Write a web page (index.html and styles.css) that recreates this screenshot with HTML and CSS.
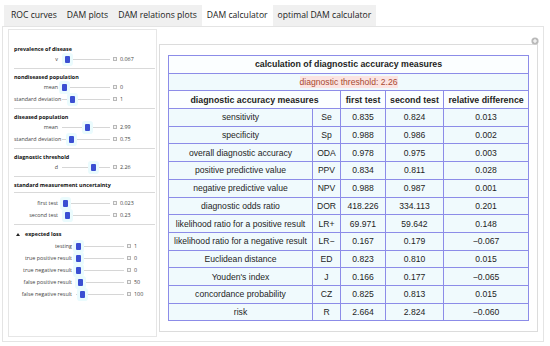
FILE: index.html
```html
<!DOCTYPE html>
<html lang="en">
<head>
    <meta charset="UTF-8">
    <title>DAM calculator</title>
    <link rel="stylesheet" href="styles.css">
</head>
<body>
    <div class="tabs">
        <div class="tab">ROC curves</div>
        <div class="tab">DAM plots</div>
        <div class="tab">DAM relations plots</div>
        <div class="tab active">DAM calculator</div>
        <div class="tab">optimal DAM calculator</div>
    </div>

    <div class="tab-panel">
        <div class="controls">
            <div class="section first">
                <div class="section-title">prevalence of disease</div>
                <div class="control-row">
                    <span class="label">v</span>
                    <span class="track"><span class="thumb" style="left: 8%"></span></span>
                    <span class="box"></span>
                    <span class="value">0.067</span>
                </div>
            </div>

            <div class="section">
                <div class="section-title">nondiseased population</div>
                <div class="control-row">
                    <span class="label">mean</span>
                    <span class="track"><span class="thumb" style="left: 2%"></span></span>
                    <span class="box"></span>
                    <span class="value">0</span>
                </div>
                <div class="control-row">
                    <span class="label">standard deviation</span>
                    <span class="track"><span class="thumb" style="left: 19%"></span></span>
                    <span class="box"></span>
                    <span class="value">1</span>
                </div>
            </div>

            <div class="section">
                <div class="section-title">diseased population</div>
                <div class="control-row">
                    <span class="label">mean</span>
                    <span class="track"><span class="thumb" style="left: 50%"></span></span>
                    <span class="box"></span>
                    <span class="value">2.99</span>
                </div>
                <div class="control-row">
                    <span class="label">standard deviation</span>
                    <span class="track"><span class="thumb" style="left: 17%"></span></span>
                    <span class="box"></span>
                    <span class="value">0.75</span>
                </div>
            </div>

            <div class="section">
                <div class="section-title">diagnostic threshold</div>
                <div class="control-row">
                    <span class="label">d</span>
                    <span class="track"><span class="thumb" style="left: 62%"></span></span>
                    <span class="box"></span>
                    <span class="value">2.26</span>
                </div>
            </div>

            <div class="section">
                <div class="section-title">standard measurement uncertainty</div>
            </div>

            <div class="section">
                <div class="control-row">
                    <span class="label">first test</span>
                    <span class="track"><span class="thumb" style="left: 4%"></span></span>
                    <span class="box"></span>
                    <span class="value">0.023</span>
                </div>
                <div class="control-row">
                    <span class="label">second test</span>
                    <span class="track"><span class="thumb" style="left: 8%"></span></span>
                    <span class="box"></span>
                    <span class="value">0.23</span>
                </div>
            </div>

            <div class="section loss">
                <div class="section-title"><span class="arrow"></span>expected loss</div>
                <div class="control-row">
                    <span class="label">testing</span>
                    <span class="track"><span class="thumb" style="left: 2%"></span></span>
                    <span class="box"></span>
                    <span class="value">1</span>
                </div>
                <div class="control-row">
                    <span class="label">true positive result</span>
                    <span class="track"><span class="thumb" style="left: 2%"></span></span>
                    <span class="box"></span>
                    <span class="value">0</span>
                </div>
                <div class="control-row">
                    <span class="label">true negative result</span>
                    <span class="track"><span class="thumb" style="left: 2%"></span></span>
                    <span class="box"></span>
                    <span class="value">0</span>
                </div>
                <div class="control-row">
                    <span class="label">false positive result</span>
                    <span class="track"><span class="thumb" style="left: 6%"></span></span>
                    <span class="box"></span>
                    <span class="value">50</span>
                </div>
                <div class="control-row">
                    <span class="label">false negative result</span>
                    <span class="track"><span class="thumb" style="left: 10%"></span></span>
                    <span class="box"></span>
                    <span class="value">100</span>
                </div>
            </div>
        </div>

        <div class="output">
            <span class="corner-icon">
                <svg width="8" height="8" viewBox="0 0 8 8">
                    <circle cx="4" cy="4" r="3.6" fill="#b9b9b9"/>
                    <path d="M4 2v4M2 4h4" stroke="#fff" stroke-width="1.1"/>
                </svg>
            </span>
            <table class="measures">
                <colgroup>
                    <col style="width: 144px">
                    <col style="width: 28px">
                    <col style="width: 45px">
                    <col style="width: 58px">
                    <col style="width: 85px">
                </colgroup>
                <tr class="title-row"><td colspan="5">calculation of diagnostic accuracy measures</td></tr>
                <tr class="threshold-row"><td colspan="5"><span class="threshold">diagnostic threshold: 2.26</span></td></tr>
                <tr class="head-row">
                    <td colspan="2">diagnostic accuracy measures</td>
                    <td>first test</td>
                    <td>second test</td>
                    <td>relative difference</td>
                </tr>
                <tr><td>sensitivity</td><td>Se</td><td>0.835</td><td>0.824</td><td>0.013</td></tr>
                <tr><td>specificity</td><td>Sp</td><td>0.988</td><td>0.986</td><td>0.002</td></tr>
                <tr><td>overall diagnostic accuracy</td><td>ODA</td><td>0.978</td><td>0.975</td><td>0.003</td></tr>
                <tr><td>positive predictive value</td><td>PPV</td><td>0.834</td><td>0.811</td><td>0.028</td></tr>
                <tr><td>negative predictive value</td><td>NPV</td><td>0.988</td><td>0.987</td><td>0.001</td></tr>
                <tr><td>diagnostic odds ratio</td><td>DOR</td><td>418.226</td><td>334.113</td><td>0.201</td></tr>
                <tr><td>likelihood ratio for a positive result</td><td>LR+</td><td>69.971</td><td>59.642</td><td>0.148</td></tr>
                <tr><td>likelihood ratio for a negative result</td><td>LR&minus;</td><td>0.167</td><td>0.179</td><td>&minus;0.067</td></tr>
                <tr><td>Euclidean distance</td><td>ED</td><td>0.823</td><td>0.810</td><td>0.015</td></tr>
                <tr><td>Youden's index</td><td>J</td><td>0.166</td><td>0.177</td><td>&minus;0.065</td></tr>
                <tr><td>concordance probability</td><td>CZ</td><td>0.825</td><td>0.813</td><td>0.015</td></tr>
                <tr><td>risk</td><td>R</td><td>2.664</td><td>2.824</td><td>&minus;0.060</td></tr>
            </table>
        </div>
    </div>
</body>
</html>
```

FILE: styles.css
```css
* {
    margin: 0;
    padding: 0;
    box-sizing: border-box;
}

body {
    background: white;
    font-family: 'Open Sans', 'Noto Sans', sans-serif;
    color: #222;
    width: 550px;
    height: 346px;
    overflow: hidden;
}

/* tab bar */
.tabs {
    display: inline-flex;
    margin: 5px 0 0 4px;
    padding-left: 2px;
    background: #f0f0f0;
    height: 21px;
}

.tab {
    padding: 0 5px;
    font-size: 8.6px;
    line-height: 21px;
    color: #1a1a1a;
}

.tab.active {
    background: white;
}

.tab-panel {
    display: flex;
    gap: 2px;
    width: 542px;
    height: 316px;
    margin-left: 2px;
    padding: 2px 4px 0 5px;
    border: 1px solid #e4e4e4;
}

/* left column with sliders */
.controls {
    width: 149px;
    height: 308px;
    border: 1px solid #e6e6e6;
    padding: 0 1px 0 5px;
}

.section {
    padding: 4px 0 3px;
    border-bottom: 1px solid #d9d9d9;
}

.section.first {
    padding-top: 15px;
}

.section.loss {
    padding-top: 5px;
    border-bottom: none;
}

.section-title {
    font-size: 5.4px;
    font-weight: 700;
    line-height: 8px;
    height: 8px;
    color: #111;
    display: flex;
    align-items: center;
}

.loss .section-title {
    margin-bottom: 2px;
}

.arrow {
    width: 0;
    height: 0;
    margin: 0 5px 0 2px;
    border-left: 2.5px solid transparent;
    border-right: 2.5px solid transparent;
    border-bottom: 3.5px solid #222;
}

.control-row {
    display: flex;
    align-items: center;
    height: 12px;
    font-size: 5.4px;
    color: #444;
}

.label {
    width: 44px;
    text-align: right;
    white-space: nowrap;
}

.loss .label {
    width: 58px;
}

.track {
    position: relative;
    width: 48px;
    height: 1px;
    margin-left: 4px;
    background: #d6d6d6;
}

.thumb {
    position: absolute;
    top: -3px;
    width: 5px;
    height: 7px;
    margin-left: -1px;
    background: #3b4fd2;
    border-radius: 1px;
    box-shadow: 0 0 0 3px #eafbfd;
}

.box {
    width: 4px;
    height: 4px;
    margin-left: 3px;
    border: 1px solid #b8b8b8;
    background: #f4f4f4;
}

.value {
    margin-left: 3px;
}

/* right column with the results table */
.output {
    position: relative;
    width: 379px;
    height: 288px;
    margin-top: 15px;
    border: 1px solid #dcdcdc;
    padding: 10px 9px 0 8px;
}

.corner-icon {
    position: absolute;
    top: -8px;
    right: -2px;
    line-height: 0;
}

.measures {
    width: 360px;
    table-layout: fixed;
    border-collapse: collapse;
    border: 1px solid #5c5cd4;
    font-family: 'Liberation Sans', Arial, sans-serif;
    font-size: 8.6px;
    color: #1e1e1e;
}

.measures td {
    height: 17.7px;
    padding: 0;
    text-align: center;
    white-space: nowrap;
    border: 1px solid #8c8ce8;
    background: #f0fafd;
}

.title-row td {
    background: #fbfeff;
    font-weight: 700;
    font-size: 8.8px;
}

.threshold-row td {
    color: #a84a30;
}

.threshold {
    background: #fbe4e2;
    padding: 1px 0;
}

.head-row td {
    background: #fbfeff;
    font-weight: 700;
    font-size: 8.8px;
}
```
